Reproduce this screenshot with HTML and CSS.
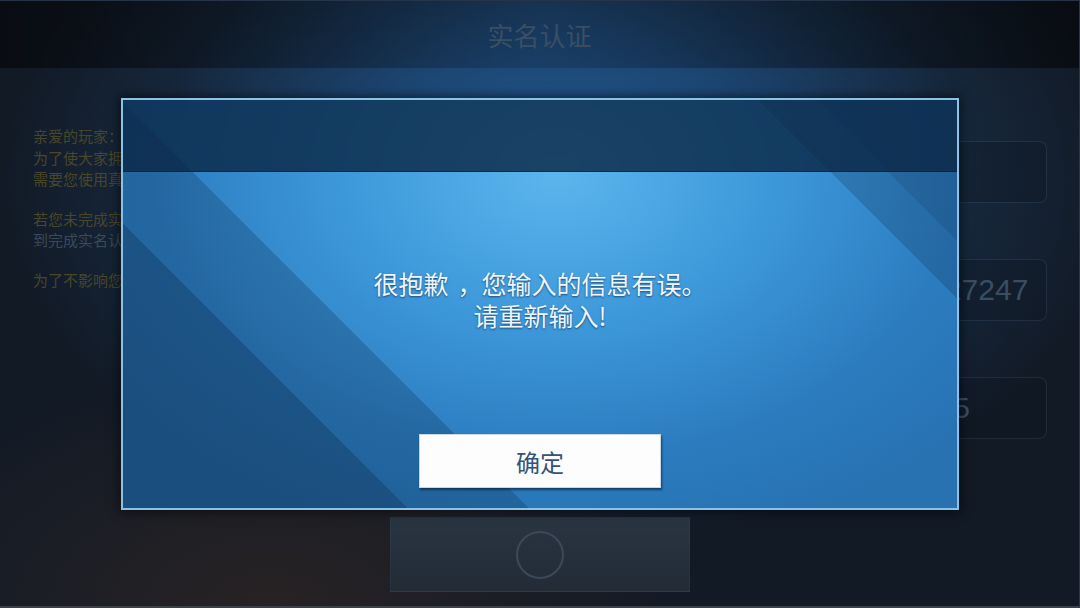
FILE: index.html
```html
<!DOCTYPE html>
<html lang="zh-CN">
<head>
  <meta charset="UTF-8" />
  <meta name="viewport" content="width=device-width, initial-scale=1.0"/>
  <title>实名认证</title>
  <link rel="stylesheet" href="styles.css">
</head>
<body>

  <div class="screen">
    <header class="topbar">
      <h1>实名认证</h1>
    </header>

    <main class="main">
      <div class="notice">
        <p>
          <span class="line">亲爱的玩家：</span>
          <span class="line">为了使大家拥有健康的游戏环境，</span>
          <span class="line">需要您使用真实的身份信息进行认证。</span>
        </p>
        <p>
          <span class="line">若您未完成实名认证，将无法进入游戏，</span>
          <span class="line muted">到完成实名认证为止。</span>
        </p>
        <p>
          <span class="line">为了不影响您的游戏体验，请尽快认证。</span>
        </p>
      </div>

      <div class="form">
        <div class="field"></div>
        <div class="field">420106199508127247</div>
        <div class="field">0571 8826391045</div>
      </div>
    </main>

    <footer class="footer">
      <div class="submit"><span class="ring"></span></div>
    </footer>

    <!-- error popup on top of the form -->
    <div class="dialog">
      <div class="dialog-head"></div>
      <div class="dialog-body">
        <p class="dialog-msg">很抱歉<span class="punct">，</span>您输入的信息有误。<br>请重新输入!</p>
        <button class="dialog-btn">确定</button>
      </div>
    </div>
  </div>

</body>
</html>
```

FILE: styles.css
```css
:root {
  --page-dark: #141d2a;
  --title-gray: #3a4e65;
  --notice-olive: #48472a;
  --field-line: rgba(120, 150, 185, 0.16);
  --dialog-edge: #8cc2e6;
  --btn-text: #34527a;
}

* {
  box-sizing: border-box;
}

body {
  margin: 0;
  background: var(--page-dark);
  font-family: "Noto Sans CJK SC", sans-serif;
}

.screen {
  position: relative;
  width: 1080px;
  height: 608px;
  overflow: hidden;
  display: flex;
  flex-direction: column;
  border-bottom: 2px solid #3c4148;
  border-right: 1px solid #2c3644;
  background:
    radial-gradient(ellipse 520px 300px at 25% 100%, rgba(58, 42, 34, 0.55), transparent 80%),
    radial-gradient(ellipse 560px 360px at 52% 30%, #24609a 0%, #1c4470 40%, #16263a 75%, #121a26 100%);
}

.topbar {
  height: 68px;
  flex-shrink: 0;
  display: flex;
  align-items: center;
  justify-content: center;
  border-top: 1px solid #26344a;
  background: linear-gradient(90deg, rgba(0, 0, 0, 0.5), rgba(0, 0, 0, 0.15) 50%, rgba(0, 0, 0, 0.5));
}

.topbar h1 {
  margin: 0;
  font-size: 26px;
  font-weight: normal;
  color: var(--title-gray);
}

.main {
  display: flex;
  justify-content: space-between;
  padding: 0 32px 0 33px;
}

.notice {
  width: 400px;
  padding-top: 57px;
  font-size: 15px;
  line-height: 21.5px;
  color: var(--notice-olive);
}

.notice p {
  margin: 0 0 18px;
}

.notice .line {
  display: block;
  white-space: nowrap;
}

.notice .muted {
  color: #3b4a58;
}

.form {
  width: 348px;
  padding-top: 73px;
  display: flex;
  flex-direction: column;
  gap: 56px;
}

.field {
  height: 62px;
  border: 1px solid var(--field-line);
  border-radius: 8px;
  background: rgba(10, 18, 30, 0.25);
  padding-left: 28px;
  font-family: "Liberation Sans", sans-serif;
  font-size: 30px;
  line-height: 60px;
  color: #3a4e63;
  white-space: nowrap;
  overflow: hidden;
}

.footer {
  display: flex;
  justify-content: center;
  margin-top: 78px;
}

.submit {
  width: 300px;
  height: 75px;
  display: flex;
  align-items: center;
  justify-content: center;
  background: linear-gradient(180deg, #2a3542, #222b36);
  border: 1px solid rgba(120, 140, 160, 0.08);
}

.ring {
  width: 48px;
  height: 48px;
  border-radius: 50%;
  border: 2px solid #3b4958;
}

/* popup */
.dialog {
  position: absolute;
  left: 121px;
  top: 98px;
  width: 838px;
  height: 412px;
  border: 2px solid var(--dialog-edge);
  box-shadow: 0 0 10px 2px rgba(0, 0, 0, 0.55);
  display: flex;
  flex-direction: column;
  background:
    linear-gradient(45deg,
      rgba(8, 28, 56, 0.42) 0 201px,
      rgba(8, 28, 56, 0.22) 201px 287px,
      transparent 287px 738px,
      rgba(8, 28, 56, 0.2) 738px 779px,
      rgba(8, 28, 56, 0.3) 779px),
    radial-gradient(ellipse 540px 380px at 52% 18%, #5cb5ec 0%, #3d98da 40%, #2b7cbf 75%, #2872b2 100%);
}

.dialog-head {
  height: 72px;
  flex-shrink: 0;
  background: rgba(10, 38, 68, 0.8);
  border-bottom: 1px solid rgba(6, 30, 56, 0.6);
}

.dialog-body {
  flex: 1;
  display: flex;
  flex-direction: column;
  align-items: center;
}

.dialog-msg {
  margin: 95px 0 0;
  font-size: 25px;
  line-height: 32px;
  text-align: center;
  color: #eef5fb;
  text-shadow: 0 1px 2px rgba(0, 20, 50, 0.6);
}

/* comma sits mid-cell, with a little air either side */
.dialog-msg .punct {
  margin: 0 -1px 0 9px;
}

.dialog-btn {
  margin-top: 103px;
  width: 242px;
  height: 54px;
  border: 1px solid #c9d6e3;
  background: #fdfdfd;
  box-shadow: 1px 2px 2px rgba(4, 26, 52, 0.6);
  font-family: "Noto Sans CJK SC", sans-serif;
  font-size: 24px;
  color: var(--btn-text);
  cursor: pointer;
}
```
